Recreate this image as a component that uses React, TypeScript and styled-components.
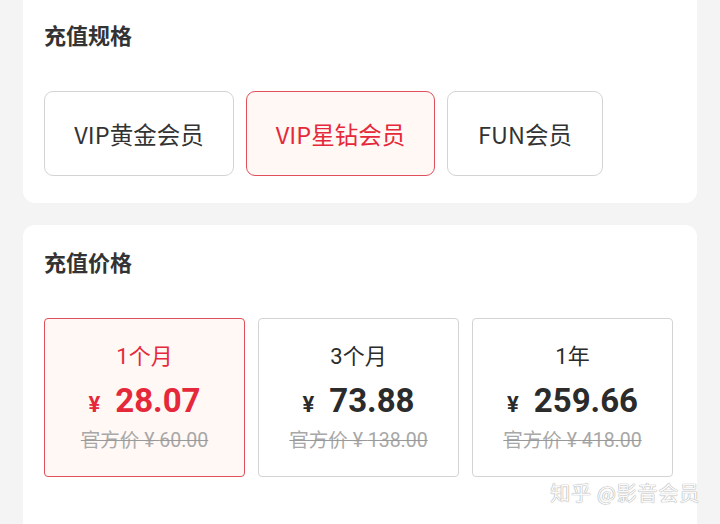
import React from "react";
import styled, { createGlobalStyle } from "styled-components";

const Global = createGlobalStyle`
  html, body { margin: 0; padding: 0; background: #f4f4f4; }
  body { font-family: Roboto, "Noto Sans CJK SC", sans-serif; overflow: hidden; }
`;

const Page = styled.div`
  position: relative;
  width: 720px;
  height: 524px;
  overflow: hidden;
  padding: 0 23px;
  box-sizing: border-box;
  display: flex;
  flex-direction: column;
  gap: 22px;
`;

const Card = styled.section<{ $top?: boolean }>`
  background: #fff;
  border-radius: ${(p) => (p.$top ? "0 0 12px 12px" : "12px")};
  padding: ${(p) => (p.$top ? "20px 21px 27px 21px" : "22px 21px 60px 21px")};
  display: flex;
  flex-direction: column;
  gap: ${(p) => (p.$top ? "43px" : "43px")};
`;

const Title = styled.h2`
  margin: 0;
  font-family: "Noto Sans CJK SC", sans-serif;
  font-size: 22px;
  line-height: 28px;
  font-weight: 700;
  color: #333;
`;

const Options = styled.div`
  display: flex;
  gap: 12px;
`;

const Option = styled.div<{ $active?: boolean; $w: number }>`
  width: ${(p) => p.$w}px;
  height: 85px;
  box-sizing: border-box;
  border-radius: 9px;
  border: 1.5px solid ${(p) => (p.$active ? "#df4f5c" : "#d4d4d4")};
  background: ${(p) => (p.$active ? "#fff8f5" : "#fff")};
  color: ${(p) => (p.$active ? "#e5283a" : "#333")};
  display: flex;
  align-items: center;
  justify-content: center;
  font-family: "Noto Sans CJK SC", sans-serif;
  font-size: 23.5px;
`;

const Prices = styled.div`
  display: flex;
  gap: 13px;
`;

const PriceCard = styled.div<{ $active?: boolean }>`
  width: 201px;
  height: 159px;
  box-sizing: border-box;
  border-radius: 4px;
  border: 1.5px solid ${(p) => (p.$active ? "#df4f5c" : "#d4d4d4")};
  background: ${(p) => (p.$active ? "#fff8f5" : "#fff")};
  color: ${(p) => (p.$active ? "#e5283a" : "#2b2b2b")};
  display: flex;
  flex-direction: column;
  align-items: center;
  justify-content: center;
  gap: 4px;
`;

const Period = styled.div`
  font-family: Roboto, "Noto Sans CJK SC", sans-serif;
  font-size: 22px;
  line-height: 28px;
`;

const Amount = styled.div`
  display: flex;
  align-items: baseline;
  line-height: 40px;
  margin-top: 6px;
`;

const Yen = styled.span`
  font-family: Roboto, "Noto Sans CJK SC", sans-serif;
  font-size: 22px;
  font-weight: 700;
  margin-right: 15px;
`;

const Number = styled.span`
  font-family: Roboto, sans-serif;
  font-size: 33px;
  font-weight: 700;
`;

const Official = styled.div`
  font-family: Roboto, "Noto Sans CJK SC", sans-serif;
  font-size: 19.5px;
  line-height: 24px;
  color: #a8a8a8;
  text-decoration: line-through;
  text-decoration-color: #999;
`;

const Watermark = styled.div`
  position: absolute;
  right: 20px;
  bottom: 18px;
  font-family: "Noto Sans CJK SC", sans-serif;
  font-size: 20px;
  line-height: 26px;
  color: #fafafa;
  text-shadow: 0 0 1px #a0a0a0, 0 0 1px #a0a0a0;
  letter-spacing: 0.8px;
`;

const options = [
  { label: "VIP黄金会员", w: 190 },
  { label: "VIP星钻会员", w: 189, active: true },
  { label: "FUN会员", w: 156 },
];

const prices = [
  { period: "1个月", price: "28.07", official: "60.00", active: true },
  { period: "3个月", price: "73.88", official: "138.00" },
  { period: "1年", price: "259.66", official: "418.00" },
];

export default function App() {
  return (
    <>
      <Global />
      <Page>
        <Card $top>
          <Title>充值规格</Title>
          <Options>
            {options.map((o) => (
              <Option key={o.label} $active={o.active} $w={o.w}>
                {o.label}
              </Option>
            ))}
          </Options>
        </Card>
        <Card>
          <Title>充值价格</Title>
          <Prices>
            {prices.map((p) => (
              <PriceCard key={p.period} $active={p.active}>
                <Period>{p.period}</Period>
                <Amount>
                  <Yen>¥</Yen>
                  <Number>{p.price}</Number>
                </Amount>
                <Official>官方价 ¥ {p.official}</Official>
              </PriceCard>
            ))}
          </Prices>
        </Card>
        <Watermark>知乎 @影音会员</Watermark>
      </Page>
    </>
  );
}
